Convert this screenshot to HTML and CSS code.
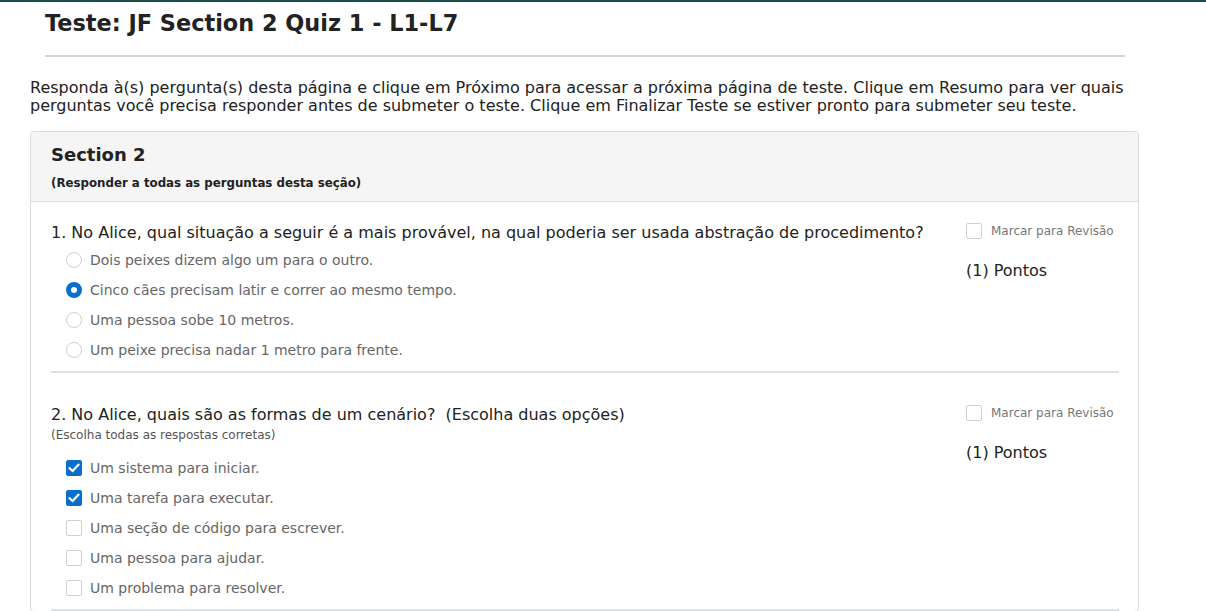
FILE: index.html
```html
<!DOCTYPE html>
<html lang="pt">
<head>
<meta charset="utf-8">
<title>Teste</title>
<link rel="stylesheet" href="styles.css">
</head>
<body>
<div class="page">
  <div class="header">
    <h1 class="title">Teste: JF Section 2 Quiz 1 - L1-L7</h1>
    <div class="rule"></div>
  </div>
  <p class="intro">Responda à(s) pergunta(s) desta página e clique em Próximo para acessar a próxima página de teste. Clique em Resumo para ver quais perguntas você precisa responder antes de submeter o teste. Clique em Finalizar Teste se estiver pronto para submeter seu teste.</p>
  <div class="card">
    <div class="card-head">
      <h2 class="section-title">Section 2</h2>
      <div class="section-sub">(Responder a todas as perguntas desta seção)</div>
    </div>
    <div class="card-body">
      <div class="question">
        <div class="q-main">
          <div class="q-text">1. No Alice, qual situação a seguir é a mais provável, na qual poderia ser usada abstração de procedimento?</div>
          <ul class="options">
            <li class="option"><span class="radio"></span><span class="opt-text">Dois peixes dizem algo um para o outro.</span></li>
            <li class="option"><span class="radio checked"></span><span class="opt-text">Cinco cães precisam latir e correr ao mesmo tempo.</span></li>
            <li class="option"><span class="radio"></span><span class="opt-text">Uma pessoa sobe 10 metros.</span></li>
            <li class="option"><span class="radio"></span><span class="opt-text">Um peixe precisa nadar 1 metro para frente.</span></li>
          </ul>
        </div>
        <div class="q-side">
          <div class="review"><span class="box"></span><span class="review-text">Marcar para Revisão</span></div>
          <div class="points">(1) Pontos</div>
        </div>
      </div>
      <div class="question q2">
        <div class="q-main">
          <div class="q-text">2. No Alice, quais são as formas de um cenário?&nbsp; (Escolha duas opções)</div>
          <div class="q-hint">(Escolha todas as respostas corretas)</div>
          <ul class="options multi">
            <li class="option"><span class="box checked"><svg viewBox="0 0 16 16" width="16" height="16"><path d="M3.6 8.2 L6.6 11 L12.4 4.8" fill="none" stroke="#fff" stroke-width="2.2" stroke-linecap="square"/></svg></span><span class="opt-text">Um sistema para iniciar.</span></li>
            <li class="option"><span class="box checked"><svg viewBox="0 0 16 16" width="16" height="16"><path d="M3.6 8.2 L6.6 11 L12.4 4.8" fill="none" stroke="#fff" stroke-width="2.2" stroke-linecap="square"/></svg></span><span class="opt-text">Uma tarefa para executar.</span></li>
            <li class="option"><span class="box"></span><span class="opt-text">Uma seção de código para escrever.</span></li>
            <li class="option"><span class="box"></span><span class="opt-text">Uma pessoa para ajudar.</span></li>
            <li class="option"><span class="box"></span><span class="opt-text">Um problema para resolver.</span></li>
          </ul>
        </div>
        <div class="q-side">
          <div class="review"><span class="box"></span><span class="review-text">Marcar para Revisão</span></div>
          <div class="points">(1) Pontos</div>
        </div>
      </div>
    </div>
  </div>
</div>
</body>
</html>
```

FILE: styles.css
```css
html, body {
  margin: 0;
  padding: 0;
  background: #fff;
}
body {
  font-family: "DejaVu Sans", Verdana, sans-serif;
  color: #222;
  border-top: 2px solid #1c4d4d;
  overflow: hidden;
}
.page {
  padding: 0 0 0 30px;
}
.header {
  padding: 8px 0 0 15px;
  width: 1080px;
}
.title {
  margin: 0;
  font-size: 22.4px;
  line-height: 26px;
  font-weight: bold;
  color: #222;
}
.rule {
  margin-top: 19px;
  height: 2px;
  background: #d6d6d6;
}
.intro {
  margin: 22px 0 0 0;
  width: 1112px;
  font-size: 16px;
  line-height: 18px;
  color: #222;
}
.card {
  margin-top: 16px;
  width: 1107px;
  border: 1px solid #dcdcdc;
  border-radius: 4px;
}
.card-head {
  background: #f5f5f5;
  border-bottom: 1px solid #dcdcdc;
  padding: 12px 20px 10px 20px;
  border-radius: 4px 4px 0 0;
}
.section-title {
  margin: 0;
  font-size: 18px;
  line-height: 22px;
  font-weight: bold;
}
.section-sub {
  margin-top: 9px;
  font-size: 11.8px;
  line-height: 16px;
  font-weight: bold;
}
.card-body {
  padding: 0 19px 0 20px;
}
.question {
  display: flex;
  justify-content: space-between;
  border-bottom: 2px solid #dde0e4;
  padding: 21px 0 6px 0;
}
.q2 {
  padding-top: 32px;
}
.q-main {
  flex: 1;
}
.q-text {
  font-size: 16px;
  line-height: 20px;
  color: #222;
}
.q-hint {
  margin-top: 2px;
  font-size: 12px;
  line-height: 16px;
  color: #555;
}
.options {
  list-style: none;
  margin: 0;
  padding: 0 0 0 15px;
}
.options.multi {
  margin-top: 10px;
}
.option {
  display: flex;
  align-items: center;
  height: 30px;
}
.options:not(.multi) .option:first-child {
  margin-top: 2px;
}
.opt-text {
  margin-left: 8px;
  font-size: 14px;
  color: #666;
}
.radio {
  display: inline-block;
  box-sizing: border-box;
  width: 16px;
  height: 16px;
  border: 1px solid #d0d0d0;
  border-radius: 50%;
  background: #fff;
}
.radio.checked {
  border: 5px solid #0a6fcc;
  background: #fff;
}
.box {
  display: inline-block;
  box-sizing: border-box;
  width: 16px;
  height: 16px;
  border: 1px solid #d0d0d0;
  border-radius: 2px;
  background: #fff;
  position: relative;
}
.box.checked {
  background: #0a6fcc;
  border-color: #0a6fcc;
}
.box.checked svg {
  position: absolute;
  left: -1px;
  top: -1px;
}
.q-side {
  width: 153px;
  flex: none;
}
.review {
  display: flex;
  align-items: center;
  margin-top: 0;
}
.review-text {
  margin-left: 9px;
  font-size: 12px;
  color: #777;
}
.points {
  margin-top: 22px;
  font-size: 16px;
  line-height: 20px;
  color: #222;
}
```
